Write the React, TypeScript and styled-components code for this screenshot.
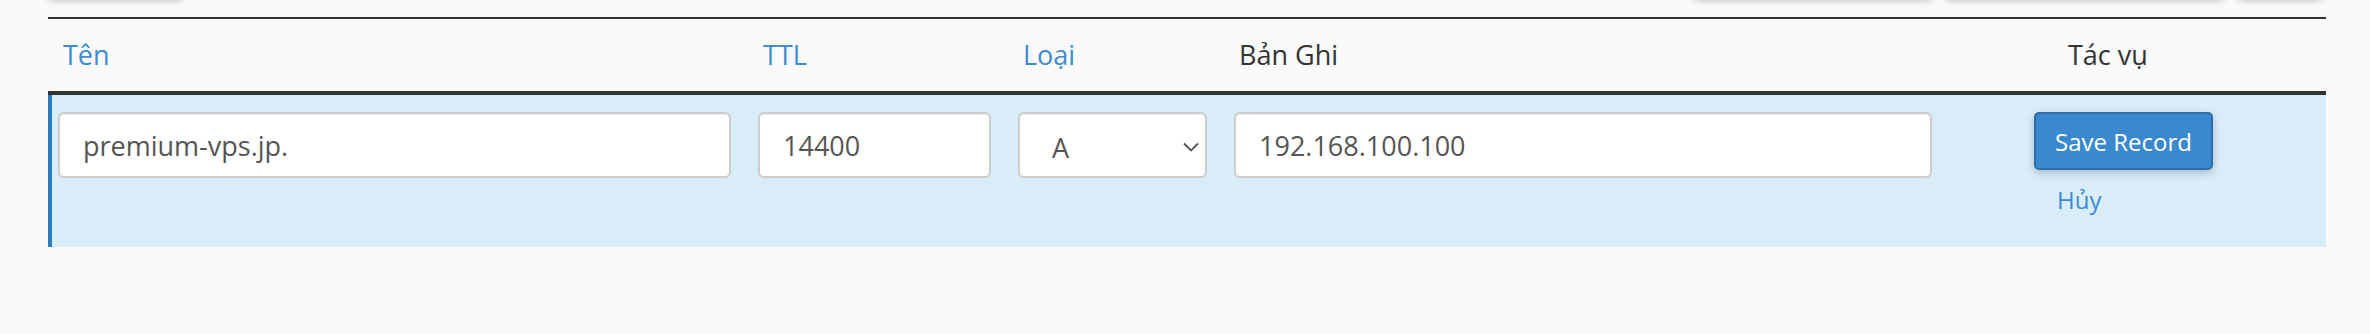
import styled, { createGlobalStyle } from "styled-components";

const GlobalStyle = createGlobalStyle`
  html, body {
    margin: 0;
    padding: 0;
    background: #fafafa;
  }
  body {
    font-family: "Open Sans", "Liberation Sans", sans-serif;
    color: #333;
  }
`;

const COLUMNS = "673px 233px 189px 698px 1fr";

interface IHeadCell {
  label: string;
  sortable?: boolean;
  pad?: number;
}

const HEADERS: IHeadCell[] = [
  { label: "Tên", sortable: true },
  { label: "TTL", sortable: true },
  { label: "Loại", sortable: true },
  { label: "Bản Ghi" },
  { label: "Tác vụ", pad: 109 },
];

export default function App() {
  return (
    <Page>
      <GlobalStyle />
      <Toolbar>
        <ToolButton $w={134} />
        <Spacer />
        <ToolButton $w={238} />
        <ToolButton $w={278} />
        <ToolButton $w={84} />
      </Toolbar>

      <Table>
        <HeadRow>
          {HEADERS.map((h) => (
            <HeadCell key={h.label} $link={!!h.sortable} $pad={h.pad ?? 5}>
              {h.label}
            </HeadCell>
          ))}
        </HeadRow>

        <RecordRow>
          <TextInput defaultValue="premium-vps.jp." />
          <TextInput defaultValue="14400" />
          <SelectWrap>
            <Select defaultValue="A">
              <option value="A">A</option>
              <option value="AAAA">AAAA</option>
              <option value="CNAME">CNAME</option>
            </Select>
            <Chevron viewBox="0 0 16 10" aria-hidden>
              <path d="M1 1.5 L8 8.5 L15 1.5" />
            </Chevron>
          </SelectWrap>
          <TextInput defaultValue="192.168.100.100" />
          <Actions>
            <SaveButton type="button">Save Record</SaveButton>
            <CancelLink href="#">Hủy</CancelLink>
          </Actions>
        </RecordRow>
      </Table>
    </Page>
  );
}

const Page = styled.div`
  display: flex;
  flex-direction: column;
  width: 2278px;
  margin-left: 48px;
`;

const Toolbar = styled.div`
  display: flex;
  align-items: stretch;
  gap: 14px;
  height: 40px;
  margin-top: -41px;
  margin-bottom: 18px;
  padding-right: 4px;
`;

const Spacer = styled.div`
  flex: 1;
`;

const ToolButton = styled.div<{ $w: number }>`
  width: ${(p) => p.$w}px;
  background: #fafafa;
  border-radius: 4px;
  box-shadow: 0 2px 7px rgba(0, 0, 0, 0.22);
`;

const Table = styled.div`
  border-top: 2px solid #333;
`;

const HeadRow = styled.div`
  display: grid;
  grid-template-columns: ${COLUMNS};
  column-gap: 27px;
  align-items: center;
  height: 72px;
  padding-left: 10px;
  border-bottom: 4px solid #333;
`;

const HeadCell = styled.div<{ $link: boolean; $pad: number }>`
  padding-left: ${(p) => p.$pad}px;
  font-size: 27px;
  line-height: 38px;
  color: ${(p) => (p.$link ? "#3d8bd2" : "#333")};
  white-space: nowrap;
`;

const RecordRow = styled.div`
  display: grid;
  grid-template-columns: ${COLUMNS};
  column-gap: 27px;
  align-items: start;
  box-sizing: border-box;
  height: 152px;
  padding: 17px 0 0 6px;
  border-left: 4px solid #2a7dc0;
  background: #d9edf8;
`;

const fieldBase = `
  box-sizing: border-box;
  width: 100%;
  height: 66px;
  margin: 0;
  border: 2px solid #cdcdcd;
  border-radius: 6px;
  background: #fff;
  box-shadow: inset 0 1px 1px rgba(0, 0, 0, 0.075);
  font-family: "Open Sans", "Liberation Sans", sans-serif;
  font-size: 27px;
  color: #555;
  outline: none;
`;

const TextInput = styled.input`
  ${fieldBase}
  padding: 0 23px;
`;

const SelectWrap = styled.div`
  position: relative;
`;

const Select = styled.select`
  ${fieldBase}
  appearance: none;
  padding: 4px 40px 0 32px;
`;

const Chevron = styled.svg`
  position: absolute;
  right: 8px;
  top: 30px;
  width: 16px;
  height: 10px;
  fill: none;
  stroke: #555;
  stroke-width: 1.8;
  pointer-events: none;
`;

const Actions = styled.div`
  display: flex;
  flex-direction: column;
  align-items: flex-start;
  padding-left: 75px;
`;

const SaveButton = styled.button`
  box-sizing: border-box;
  width: 179px;
  height: 58px;
  padding: 0;
  border: 2px solid #2d6fab;
  border-radius: 5px;
  background: #3a89cf;
  box-shadow: 0 3px 8px rgba(0, 0, 0, 0.22);
  color: #fff;
  font-family: "Open Sans", "Liberation Sans", sans-serif;
  font-size: 24px;
  cursor: pointer;
`;

const CancelLink = styled.a`
  margin: 13px 0 0 23px;
  font-size: 24px;
  line-height: 34px;
  color: #3d8bd2;
  text-decoration: none;
`;
